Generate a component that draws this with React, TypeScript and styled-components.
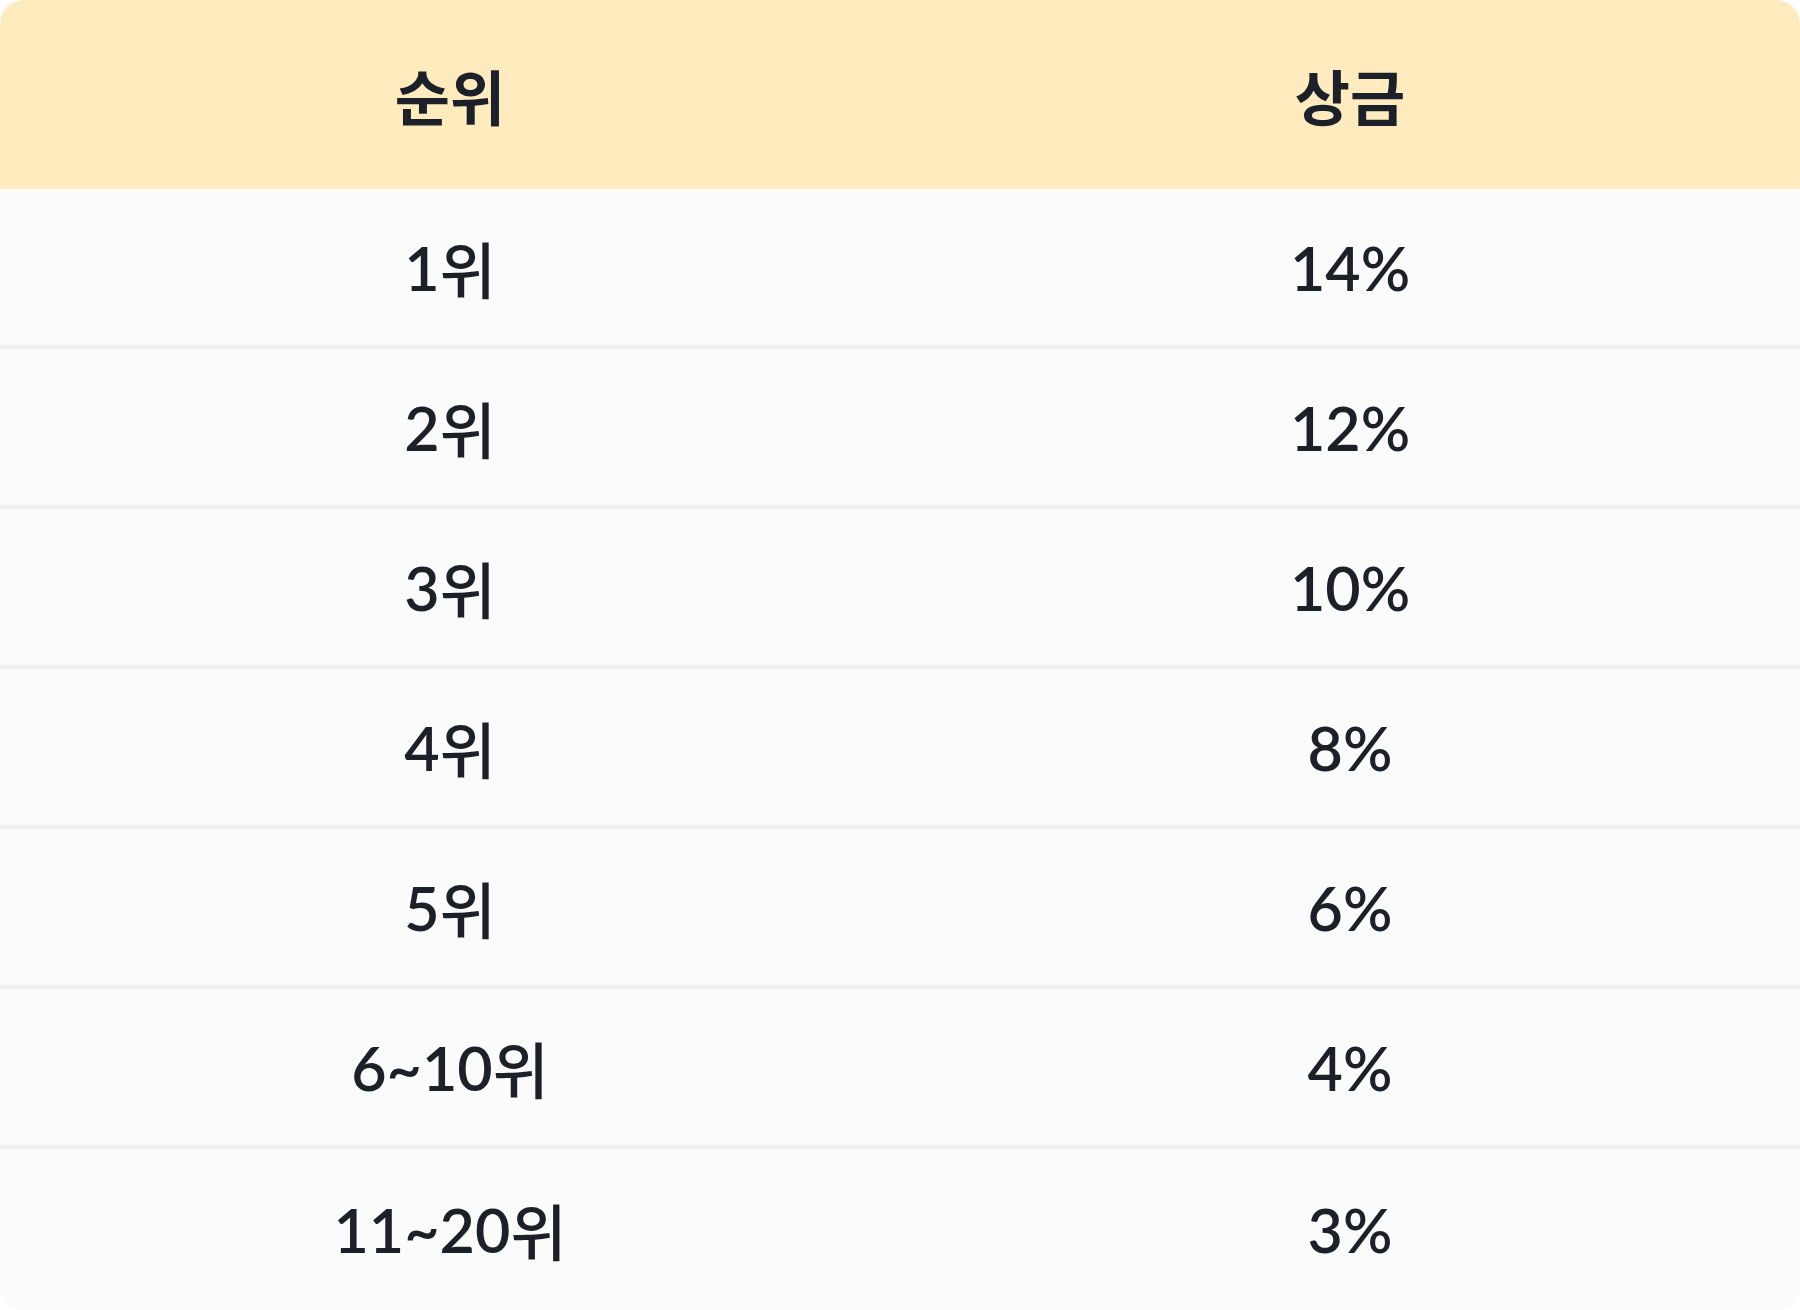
import styled, { createGlobalStyle } from "styled-components";

const GlobalStyle = createGlobalStyle`
  html, body {
    margin: 0;
    padding: 0;
    background: #ffffff;
  }
  body {
    font-family: Lato, "Noto Sans CJK KR", sans-serif;
    color: #1c2029;
  }
`;

const Table = styled.div`
  width: 1800px;
  border-radius: 24px;
  overflow: hidden;
  background: #fbfbfb;
`;

const HeadRow = styled.div`
  display: grid;
  grid-template-columns: 1fr 1fr;
  height: 189px;
  background: #ffebbd;
`;

const HeadCell = styled.div`
  display: flex;
  align-items: center;
  justify-content: center;
  font-size: 60px;
  font-weight: 700;
  font-family: "Noto Sans CJK KR", sans-serif;
`;

const Row = styled.div`
  display: grid;
  grid-template-columns: 1fr 1fr;
  box-sizing: border-box;
  height: 160px;
  border-bottom: 4px solid #f0f0f0;

  &:last-child {
    border-bottom: none;
    height: 161px;
  }
`;

const Cell = styled.div`
  display: flex;
  align-items: center;
  justify-content: center;
  font-size: 61px;
  font-weight: 600;
  line-height: 1;
`;

const Suffix = styled.span`
  font-family: "Noto Sans CJK KR", sans-serif;
  font-weight: 500;
`;

const prizes = [
  ["1", "14%"],
  ["2", "12%"],
  ["3", "10%"],
  ["4", "8%"],
  ["5", "6%"],
  ["6~10", "4%"],
  ["11~20", "3%"],
];

export default function App() {
  return (
    <>
      <GlobalStyle />
      <Table>
        <HeadRow>
          <HeadCell>순위</HeadCell>
          <HeadCell>상금</HeadCell>
        </HeadRow>
        {prizes.map(([rank, prize]) => (
          <Row key={rank}>
            <Cell>
              {rank}
              <Suffix>위</Suffix>
            </Cell>
            <Cell>{prize}</Cell>
          </Row>
        ))}
      </Table>
    </>
  );
}
